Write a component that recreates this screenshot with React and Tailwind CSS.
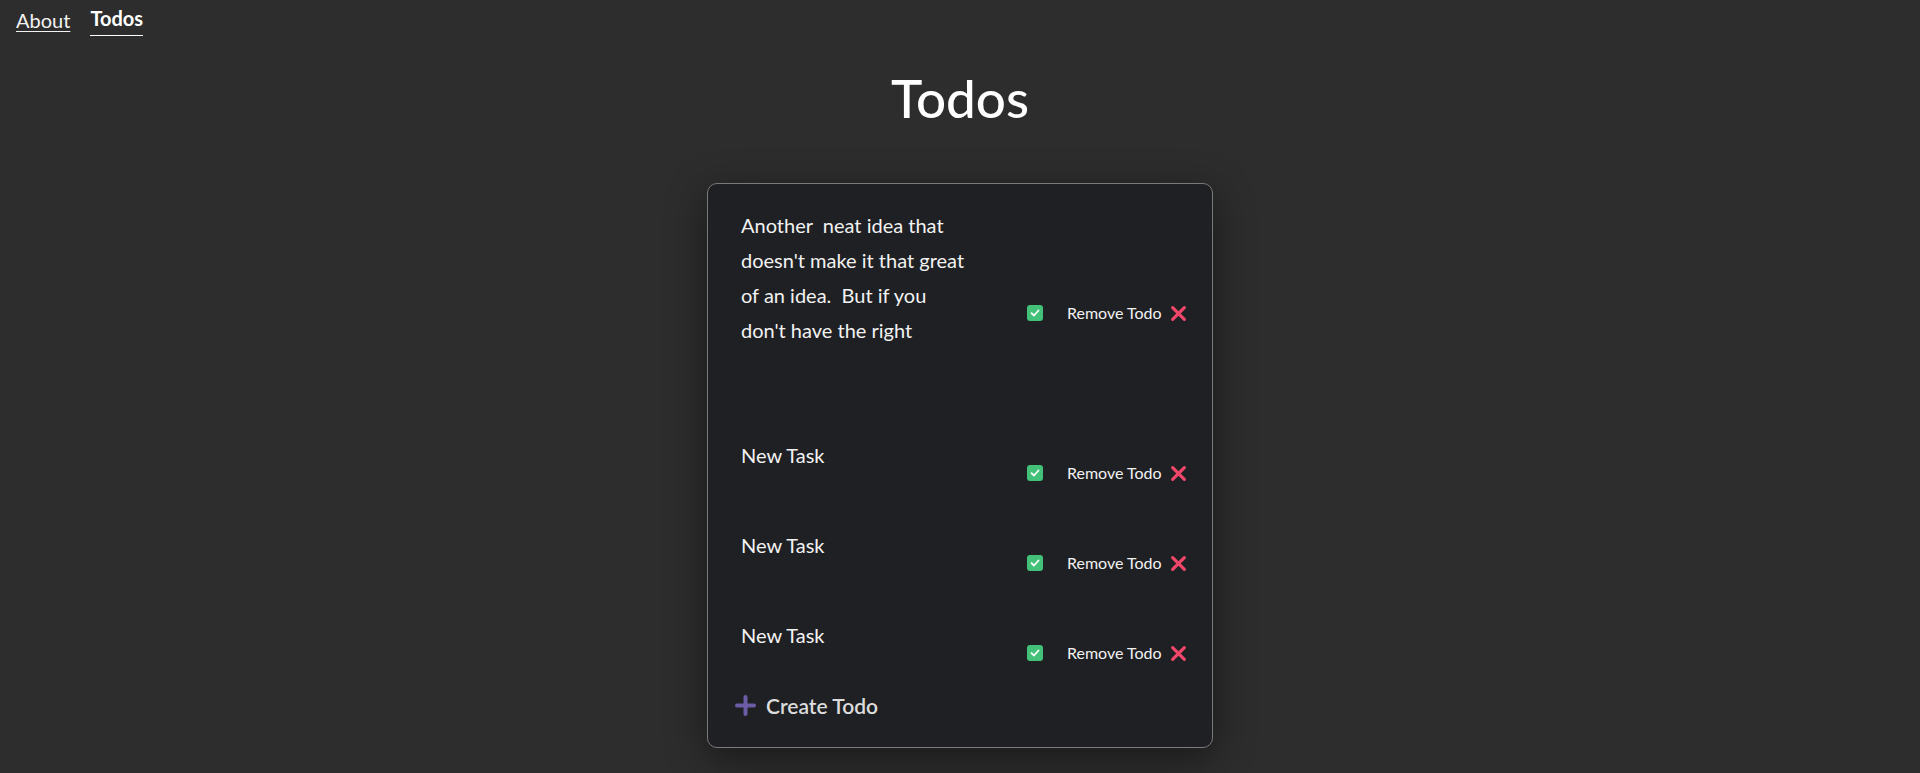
import React from 'react';

const font = { fontFamily: 'Lato, "Noto Sans", sans-serif' };

const todos = [
    { id: 1, lines: ['Another  neat idea that', "doesn't make it that great", 'of an idea.  But if you', "don't have the right"], tall: true },
    { id: 2, lines: ['New Task'] },
    { id: 3, lines: ['New Task'] },
    { id: 4, lines: ['New Task'] }
];

const CheckBox = () => (
    <div className="w-4 h-4 rounded-[3px] bg-[#43c178] flex items-center justify-center">
        <svg width="12" height="12" viewBox="0 0 12 12" fill="none">
            <path d="M2.5 6.2 L5 8.5 L9.5 3.5" stroke="#ffffff" strokeWidth="1.8" strokeLinecap="round" strokeLinejoin="round" />
        </svg>
    </div>
);

const Cross = () => (
    <svg width="17" height="17" viewBox="0 0 16 16" fill="none">
        <path d="M2.5 2.5 L13.5 13.5 M13.5 2.5 L2.5 13.5" stroke="#f2476b" strokeWidth="3" strokeLinecap="round" />
    </svg>
);

const Plus = () => (
    <svg width="21" height="21" viewBox="0 0 21 21" fill="none">
        <path d="M10.5 2 L10.5 19 M2 10.5 L19 10.5" stroke="#6c5ca6" strokeWidth="4" strokeLinecap="round" />
    </svg>
);

const TodoRow = ({ todo }) => (
    <div className="flex items-center">
        <div className={`w-[260px] shrink-0 text-[20px] leading-[35px] text-[#f2f2f2] whitespace-pre ${todo.tall ? 'h-[210px]' : 'h-[70px]'}`}>
            {todo.lines.map((line, i) => (
                <div key={i}>{line}</div>
            ))}
        </div>
        <div className="ml-[26px] shrink-0">
            <CheckBox />
        </div>
        <button className="ml-[24px] flex items-center gap-2 text-[16px] text-[#f2f2f2] whitespace-nowrap shrink-0">
            <span>Remove Todo</span>
            <Cross />
        </button>
    </div>
);

export default function App() {
    return (
        <div className="min-h-[773px] bg-[#2d2d2d] text-white" style={font}>
            <nav className="flex items-start gap-5 px-4 pt-[5px] h-[40px] text-[20px]">
                <a className="underline underline-offset-[3px] decoration-1 text-[#f2f2f2]">About</a>
                <a className="font-bold border-b border-white pb-[4px] leading-[26px]">Todos</a>
            </nav>
            <h1 className="text-center text-[53px] leading-none font-medium mt-[31px]">Todos</h1>
            <div className="w-[506px] mx-auto mt-[59px] h-[565px] rounded-[10px] border border-[#7a7a7a] bg-[#1f2023] shadow-[0_10px_40px_rgba(0,0,0,0.45)] pt-[24px] pl-[33px] pr-[20px]">
                <div className="flex flex-col gap-5">
                    {todos.map((todo) => (
                        <TodoRow key={todo.id} todo={todo} />
                    ))}
                </div>
                <button className="flex items-center gap-[10px] -ml-[6px] mt-[2px] text-[21px] font-semibold text-[#dcdcdc]">
                    <Plus />
                    <span>Create Todo</span>
                </button>
            </div>
        </div>
    );
}
